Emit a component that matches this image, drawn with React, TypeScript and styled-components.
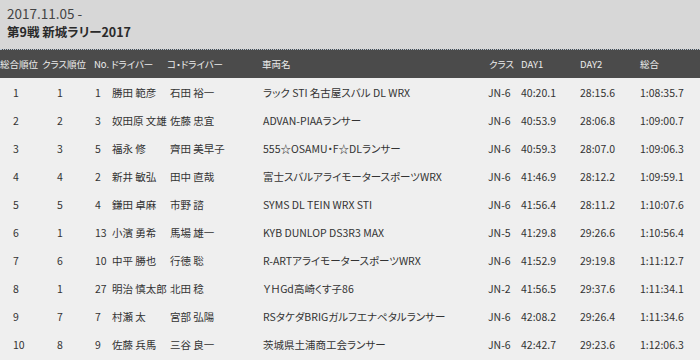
import * as React from 'react';
import styled, { createGlobalStyle } from 'styled-components';

const GlobalStyle = createGlobalStyle`
  html, body {
    margin: 0;
    padding: 0;
    background: #efefef;
  }
  body {
    font-family: "Noto Sans CJK JP", "Noto Sans", sans-serif;
    font-feature-settings: "palt";
    color: #333;
    overflow: hidden;
  }
`;

type Col = { width: number; headPad: number; bodyPad: number };

const columns: Col[] = [
  { width: 42, headPad: 0, bodyPad: 13 },
  { width: 51, headPad: 0, bodyPad: 15 },
  { width: 15, headPad: 1, bodyPad: 2 },
  { width: 59, headPad: 3, bodyPad: 4 },
  { width: 95, headPad: 0, bodyPad: 3 },
  { width: 225, headPad: 0, bodyPad: 1 },
  { width: 32, headPad: 2, bodyPad: 1 },
  { width: 59, headPad: 2, bodyPad: 2 },
  { width: 60, headPad: 2, bodyPad: 2 },
  { width: 62, headPad: 2, bodyPad: 2 }
];

const headers = ['総合順位', 'クラス順位', 'No.', 'ドライバー', 'コ・ドライバー', '車両名', 'クラス', 'DAY1', 'DAY2', '総合'];

const results = [
  ['1', '1', '1', '勝田 範彦', '石田 裕一', 'ラック STI 名古屋スバル DL WRX', 'JN-6', '40:20.1', '28:15.6', '1:08:35.7'],
  ['2', '2', '3', '奴田原 文雄', '佐藤 忠宜', 'ADVAN-PIAAランサー', 'JN-6', '40:53.9', '28:06.8', '1:09:00.7'],
  ['3', '3', '5', '福永 修', '齊田 美早子', '555☆OSAMU・F☆DLランサー', 'JN-6', '40:59.3', '28:07.0', '1:09:06.3'],
  ['4', '4', '2', '新井 敏弘', '田中 直哉', '富士スバルアライモータースポーツWRX', 'JN-6', '41:46.9', '28:12.2', '1:09:59.1'],
  ['5', '5', '4', '鎌田 卓麻', '市野 諮', 'SYMS DL TEIN WRX STI', 'JN-6', '41:56.4', '28:11.2', '1:10:07.6'],
  ['6', '1', '13', '小濱 勇希', '馬場 雄一', 'KYB DUNLOP DS3R3 MAX', 'JN-5', '41:29.8', '29:26.6', '1:10:56.4'],
  ['7', '6', '10', '中平 勝也', '行徳 聡', 'R-ARTアライモータースポーツWRX', 'JN-6', '41:52.9', '29:19.8', '1:11:12.7'],
  ['8', '1', '27', '明治 慎太郎', '北田 稔', 'ＹＨGd高崎くす子86', 'JN-2', '41:56.5', '29:37.6', '1:11:34.1'],
  ['9', '7', '7', '村瀬 太', '宮部 弘陽', 'RSタケダBRIGガルフエナペタルランサー', 'JN-6', '42:08.2', '29:26.4', '1:11:34.6'],
  ['10', '8', '9', '佐藤 兵馬', '三谷 良一', '茨城県土浦商工会ランサー', 'JN-6', '42:42.7', '29:23.6', '1:12:06.3']
];

const template = columns.map(c => `${c.width}px`).join(' ');

const Page = styled.div`
  width: 700px;
  height: 360px;
  background: #efefef;
`;

const TitleBlock = styled.div`
  background: #d7d7d7;
  height: 49px;
  padding: 4px 7px 0;
  box-sizing: border-box;
`;

const EventDate = styled.div`
  font-size: 13.5px;
  line-height: 18px;
  color: #444;
`;

const EventName = styled.div`
  font-size: 12.5px;
  line-height: 20px;
  font-weight: 700;
  color: #2a2a2a;
`;

const Row = styled.div<{ $head?: boolean }>`
  display: grid;
  grid-template-columns: ${template};
  height: ${p => (p.$head ? 29 : 28)}px;
  align-items: center;
  background: ${p => (p.$head ? '#4b4b4b' : '#efefef')};
  color: ${p => (p.$head ? '#ececec' : '#333')};
  font-size: ${p => (p.$head ? 9.5 : 10.5)}px;
  border-top: ${p => (p.$head ? '1px dotted #b9c6d2' : 'none')};
  box-sizing: border-box;
`;

const Cell = styled.div<{ $pad: number }>`
  padding-left: ${p => p.$pad}px;
  white-space: nowrap;
  overflow: visible;
`;

export default function App() {
  return (
    <Page>
      <GlobalStyle />
      <TitleBlock>
        <EventDate>2017.11.05 -</EventDate>
        <EventName>第9戦 新城ラリー2017</EventName>
      </TitleBlock>
      <Row $head>
        {headers.map((h, i) => (
          <Cell key={h} $pad={columns[i].headPad}>
            {h}
          </Cell>
        ))}
      </Row>
      {results.map(r => (
        <Row key={r[0]}>
          {r.map((v, i) => (
            <Cell key={i} $pad={columns[i].bodyPad}>
              {v}
            </Cell>
          ))}
        </Row>
      ))}
    </Page>
  );
}
